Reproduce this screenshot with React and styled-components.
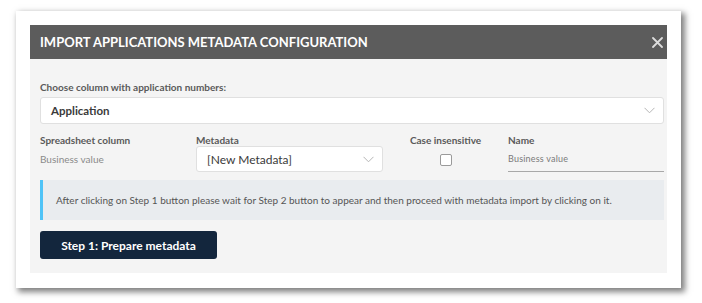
import React from "react";
import styled, { createGlobalStyle } from "styled-components";

const Global = createGlobalStyle`
  html, body {
    margin: 0;
    padding: 0;
    background: #ffffff;
  }
  body {
    font-family: Lato, "Open Sans", "Liberation Sans", sans-serif;
  }
`;

const Page = styled.div`
  padding: 11px 0 12px 16px;
`;

const Frame = styled.div`
  width: 637px;
  padding: 14px 14px 15px 14px;
  background: #ffffff;
  box-shadow: 3px 3px 6px 1px rgba(0, 0, 0, 0.5);
`;

const Modal = styled.div`
  background: #f4f4f4;
`;

const Header = styled.div`
  height: 34px;
  background: #5c5c5c;
  display: flex;
  align-items: center;
  justify-content: space-between;
  padding: 0 4px 0 10px;
`;

const Title = styled.h2`
  margin: 0;
  color: #ffffff;
  font-size: 13px;
  font-weight: 700;
`;

const CloseIcon = () => (
  <svg width="11" height="11" viewBox="0 0 11 11">
    <path d="M1 1 L10 10 M10 1 L1 10" stroke="#dcdcdc" strokeWidth="1.8" strokeLinecap="round" />
  </svg>
);

const Body = styled.div`
  padding: 22px 3px 14px 10px;
`;

const Label = styled.div`
  font-size: 10px;
  font-weight: 700;
  color: #5a5a5a;
  line-height: 12px;
  text-align: ${(p) => (p.center ? "center" : "left")};
`;

const Select = styled.div`
  height: ${(p) => p.h}px;
  box-sizing: border-box;
  background: #ffffff;
  border: 1px solid #e0e0e0;
  border-radius: 3px;
  display: flex;
  align-items: center;
  justify-content: space-between;
  padding: 0 8px 0 10px;
  font-size: ${(p) => (p.strong ? "11.5px" : "12px")};
  font-weight: ${(p) => (p.strong ? 700 : 400)};
  color: #3a3a3a;
  margin-top: ${(p) => p.mt || 0}px;
`;

const Chevron = () => (
  <svg width="11" height="7" viewBox="0 0 11 7">
    <path d="M0.5 0.8 L5.5 5.8 L10.5 0.8" fill="none" stroke="#b5b5b5" strokeWidth="1" />
  </svg>
);

const Grid = styled.div`
  display: grid;
  grid-template-columns: 156px 187px 125px 156px;
  grid-template-rows: 12px 26px;
  margin-top: 10px;
  align-items: center;
`;

const Cell = styled.div`
  display: flex;
  align-items: center;
  justify-content: ${(p) => (p.center ? "center" : "flex-start")};
  height: 26px;
`;

const Plain = styled.span`
  font-size: 10px;
  color: #8a8a8a;
`;

const Check = styled.span`
  width: 12px;
  height: 12px;
  box-sizing: border-box;
  border: 1px solid #9a9a9a;
  border-radius: 2px;
  background: #ffffff;
  margin-top: 2px;
`;

const Underline = styled.div`
  width: 100%;
  height: 26px;
  box-sizing: border-box;
  border-bottom: 1px solid #a8a8a8;
  display: flex;
  align-items: center;
  font-size: 9px;
  color: #7a7a7a;
  letter-spacing: 0.2px;
`;

const Info = styled.div`
  margin-top: 8px;
  height: 40px;
  box-sizing: border-box;
  background: #e9ecef;
  border-left: 3px solid #4fc3f7;
  display: flex;
  align-items: center;
  padding-left: 13px;
  font-size: 10px;
  color: #555555;
`;

const Button = styled.button`
  margin-top: 11px;
  width: 177px;
  height: 28px;
  border: none;
  border-radius: 3px;
  background: #13263d;
  color: #ffffff;
  font-family: inherit;
  font-size: 12px;
  font-weight: 700;
  cursor: pointer;
`;

export default function App() {
  return (
    <Page>
      <Global />
      <Frame>
        <Modal>
          <Header>
            <Title>IMPORT APPLICATIONS METADATA CONFIGURATION</Title>
            <CloseIcon />
          </Header>
          <Body>
            <Label>Choose column with application numbers:</Label>
            <Select h={27} mt={4} strong>
              <span>Application</span>
              <Chevron />
            </Select>
            <Grid>
              <Label>Spreadsheet column</Label>
              <Label>Metadata</Label>
              <Label center>Case insensitive</Label>
              <Label>Name</Label>
              <Cell>
                <Plain>Business value</Plain>
              </Cell>
              <Select h={26}>
                <span>[New Metadata]</span>
                <Chevron />
              </Select>
              <Cell center>
                <Check />
              </Cell>
              <Underline>Business value</Underline>
            </Grid>
            <Info>
              After clicking on Step 1 button please wait for Step 2 button to appear and then proceed with metadata import by clicking on it.
            </Info>
            <Button>Step 1: Prepare metadata</Button>
          </Body>
        </Modal>
      </Frame>
    </Page>
  );
}
